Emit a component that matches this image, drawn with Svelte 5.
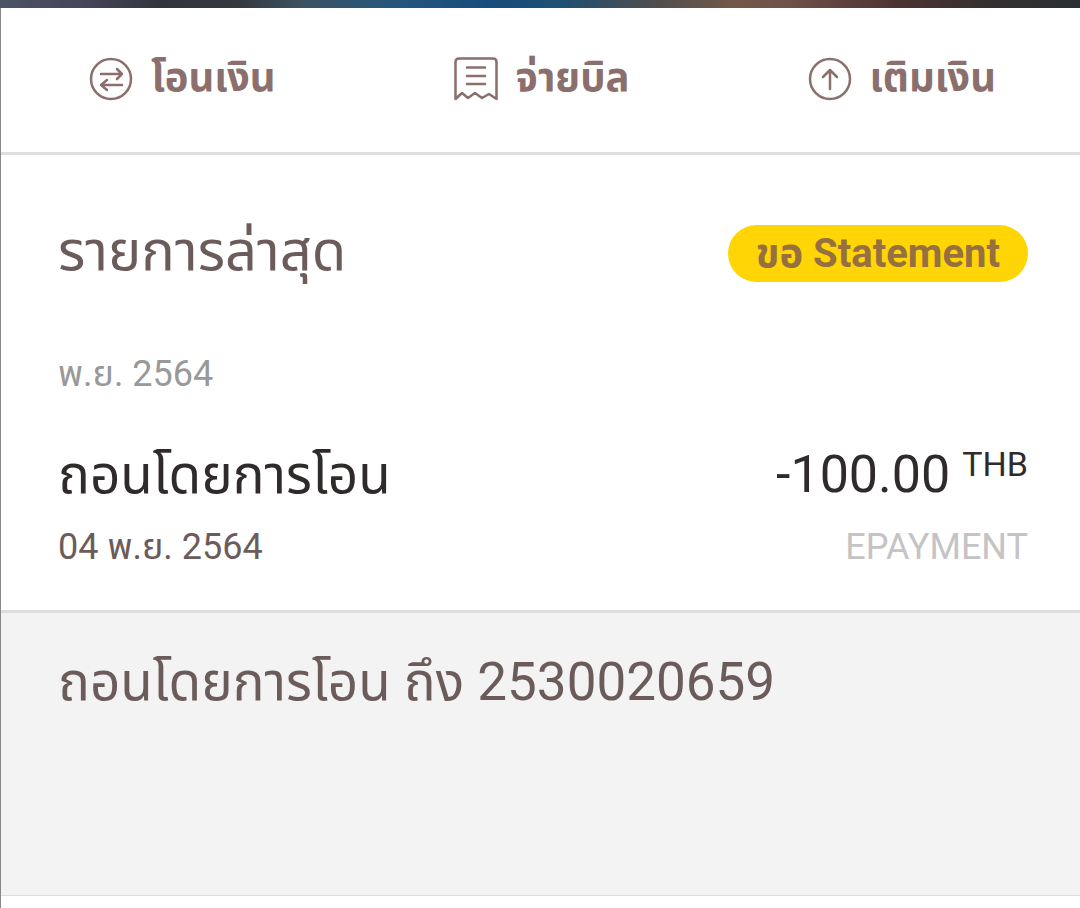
<script lang="ts">
  const month = 'พ.ย. 2564';
  const details = ['ถอนโดยการโอน ถึง 2530020659'];
</script>

<div class="page">
  <div class="photo"></div>
  <nav class="actions">
    <button>
      <svg width="44" height="44" viewBox="0 0 44 44">
        <circle cx="22" cy="22" r="20" />
        <path d="M12 17H33M28 12L33 17L28 22M33 28H12M18 23L12 28L18 33" />
      </svg>
      โอนเงิน
    </button>
    <button>
      <svg width="44" height="44" viewBox="0 0 44 44">
        <path d="M1.5 42V5Q1.5 1.5 5 1.5H39Q42.5 1.5 42.5 5V42L35 37L28 41L21 36L14 41L8 36ZM13 10.5H31M13 19H31M13 27H31" />
      </svg>
      จ่ายบิล
    </button>
    <button>
      <svg width="44" height="44" viewBox="0 0 44 44">
        <circle cx="22" cy="22" r="20" />
        <path d="M22 32V13M15 20L22 13L29 20" />
      </svg>
      เติมเงิน
    </button>
  </nav>

  <section class="recent">
    <header class="row">
      <h1>รายการล่าสุด</h1>
      <button class="statement">ขอ Statement</button>
    </header>
    <h2>{month}</h2>
    <div class="row title">
      <span>ถอนโดยการโอน</span>
      <span class="amount">-100.00<small>THB</small></span>
    </div>
    <div class="row meta">
      <time datetime="2021-11-04">04 {month}</time>
      <span class="channel">EPAYMENT</span>
    </div>
  </section>

  <section class="details">
    {#each details as line}
      <p>{line}</p>
    {/each}
  </section>
</div>

<style>
  :global(body) {
    margin: 0;
    background: #fff;
  }
  .page {
    box-sizing: border-box;
    min-height: 100vh;
    border-left: 1px solid #888;
    font-family: Roboto, "Noto Sans Thai", "Noto Sans", sans-serif;
    color: #6b5c5b;
  }
  .photo {
    height: 8px;
    margin-left: -1px;
    background: linear-gradient(90deg, #4d5366, #464459 8%, #31343c 15%, #34383f 22%, #3c5262 28%, #27577c 36%, #164c7c 45%, #1f4f72 52%, #4b4e4f 60%, #735848 68%, #70504a 73%, #4c3332 83%, #33302f 92%, #292e32);
  }
  .actions {
    display: flex;
    justify-content: space-between;
    height: 144px;
    padding: 0 84px 0 88px;
    border-bottom: 3px solid #dedede;
  }
  button {
    border: 0;
    background: none;
    font: inherit;
    color: #8b6f6c;
    cursor: pointer;
  }
  .actions button {
    display: flex;
    align-items: center;
    gap: 18px;
    padding: 0 0 2px;
    font-size: 40px;
    font-weight: 700;
  }
  svg {
    fill: none;
    stroke: #8b6f6c;
    stroke-width: 2.5;
    stroke-linecap: round;
    stroke-linejoin: round;
  }
  .row {
    display: flex;
    justify-content: space-between;
    align-items: center;
  }
  .recent {
    padding: 62px 52px 38px 57px;
    border-bottom: 3px solid #dedede;
  }
  h1, h2, p {
    margin: 0;
    font-weight: 400;
  }
  h1 {
    padding-bottom: 4px;
    font-size: 56px;
    line-height: 68px;
  }
  .statement {
    height: 57px;
    padding: 0 28px;
    border-radius: 29px;
    background: #ffd506;
    color: #97703f;
    font-size: 40px;
    font-weight: 700;
  }
  h2 {
    margin-top: 60px;
    font-size: 36px;
    line-height: 50px;
    color: #999;
  }
  .title {
    margin-top: 38px;
    font-size: 53px;
    line-height: 76px;
    color: #2f2b2b;
  }
  .amount {
    font-size: 52px;
  }
  small {
    margin-left: 12px;
    font-size: 34px;
    line-height: 1;
    vertical-align: 16px;
  }
  .meta {
    margin-top: 9px;
    font-size: 36px;
    line-height: 50px;
  }
  .channel {
    color: #c6c3c4;
  }
  .details {
    height: 220px;
    padding: 31px 57px;
    background: #f3f3f3;
    border-bottom: 1px solid #ddd;
  }
  .details p {
    font-size: 53px;
    line-height: 76px;
  }
</style>
